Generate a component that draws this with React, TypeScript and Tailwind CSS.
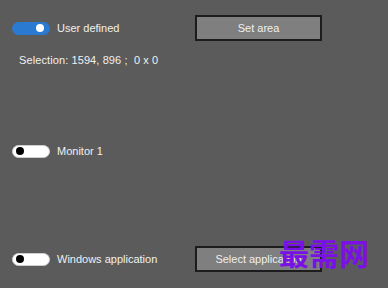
import React from "react";

function ToggleOn() {
  return (
    <div className="w-[38px] h-[13px] rounded-full bg-[#2a7ad2] flex items-center justify-end pr-[6px] shrink-0">
      <div className="w-[8px] h-[8px] rounded-full bg-white" />
    </div>
  );
}

function ToggleOff() {
  return (
    <div className="w-[38px] h-[13px] rounded-full bg-white border border-[#cfcfcf] flex items-center pl-[3px] shrink-0">
      <div className="w-[8px] h-[8px] rounded-full bg-black" />
    </div>
  );
}

function Btn({ label }: { label: string }) {
  return (
    <div className="w-[127px] h-[26px] bg-[#7f7f7f] border-2 border-[#1c1c1c] flex items-center justify-center text-[#f0f0f0] text-[11px]">
      {label}
    </div>
  );
}

export default function App() {
  return (
    <div
      className="relative w-[388px] h-[288px] bg-[#5b5b5b] overflow-hidden text-[#f0f0f0] text-[11px]"
      style={{ fontFamily: '"Liberation Sans", Arial, sans-serif' }}
    >
      <div className="flex flex-col pl-[12px] pt-[15px]">
        <div className="flex items-center h-[26px]">
          <div className="w-[183px] flex items-center gap-[7px]">
            <ToggleOn />
            <span>User defined</span>
          </div>
          <Btn label="Set area" />
        </div>
        <div className="mt-[12px] h-[14px] flex items-center pl-[7px] tracking-[0.1px]">
          Selection: 1594, 896 ;&nbsp; 0 x 0
        </div>
        <div className="mt-[71px] flex items-center h-[26px]">
          <div className="w-[183px] flex items-center gap-[7px]">
            <ToggleOff />
            <span>Monitor 1</span>
          </div>
        </div>
        <div className="mt-[82px] flex items-center h-[26px]">
          <div className="w-[183px] flex items-center gap-[7px]">
            <ToggleOff />
            <span>Windows application</span>
          </div>
          <Btn label="Select application" />
        </div>
      </div>
      <div
        className="absolute left-[279px] top-[232px] text-[30px] leading-[40px] font-bold text-[#7a10e6]"
        style={{ fontFamily: '"Noto Sans CJK SC", sans-serif' }}
      >
        最需网
      </div>
    </div>
  );
}
